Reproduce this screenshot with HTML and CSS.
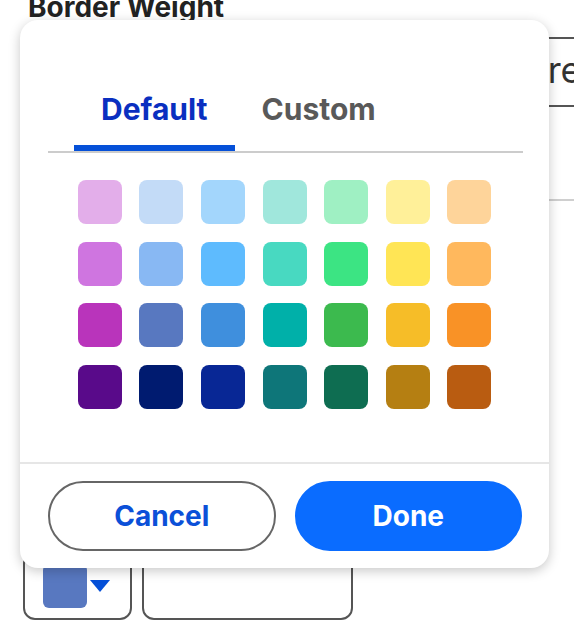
FILE: index.html
```html
<!DOCTYPE html>
<html lang="en">
<head>
    <meta charset="UTF-8">
    <meta name="viewport" content="width=device-width, initial-scale=1.0">
    <title>Border Color</title>
    <link rel="stylesheet" href="styles.css">
</head>
<body>

    <div class="page">
        <h2 class="section-title">Border Weight</h2>

        <div class="weight-row">
            <div class="segment">Square</div>
        </div>

        <hr class="divider">

        <div class="color-row">
            <button class="color-select">
                <span class="current-color"></span>
                <span class="caret"></span>
            </button>
            <div class="color-field"></div>
        </div>
    </div>

    <div class="picker">
        <div class="tabs">
            <div class="tab active">Default</div>
            <div class="tab">Custom</div>
        </div>

        <div class="swatches">
            <span class="swatch" style="background:#e3aeea"></span>
            <span class="swatch" style="background:#c3dbf7"></span>
            <span class="swatch" style="background:#a3d6fc"></span>
            <span class="swatch" style="background:#a0e7dc"></span>
            <span class="swatch" style="background:#9ff0c3"></span>
            <span class="swatch" style="background:#fff099"></span>
            <span class="swatch" style="background:#fed49a"></span>

            <span class="swatch" style="background:#cf75e0"></span>
            <span class="swatch" style="background:#88b8f3"></span>
            <span class="swatch" style="background:#5ebbfe"></span>
            <span class="swatch" style="background:#48d9c1"></span>
            <span class="swatch" style="background:#3ce483"></span>
            <span class="swatch" style="background:#ffe555"></span>
            <span class="swatch" style="background:#ffb85d"></span>

            <span class="swatch" style="background:#b934bb"></span>
            <span class="swatch" style="background:#5878c0"></span>
            <span class="swatch" style="background:#3f8fdd"></span>
            <span class="swatch" style="background:#00b0a9"></span>
            <span class="swatch" style="background:#3cba4e"></span>
            <span class="swatch" style="background:#f6bd28"></span>
            <span class="swatch" style="background:#f99226"></span>

            <span class="swatch" style="background:#590a8a"></span>
            <span class="swatch" style="background:#001b70"></span>
            <span class="swatch" style="background:#082795"></span>
            <span class="swatch" style="background:#0e7679"></span>
            <span class="swatch" style="background:#0e6d51"></span>
            <span class="swatch" style="background:#b57f12"></span>
            <span class="swatch" style="background:#b95c11"></span>
        </div>

        <div class="picker-footer">
            <button class="btn btn-cancel">Cancel</button>
            <button class="btn btn-done">Done</button>
        </div>
    </div>

</body>
</html>
```

FILE: styles.css
```css
body {
    margin: 0;
    background-color: white;
    font-family: Inter, "Liberation Sans", sans-serif;
    color: #222;
    overflow: hidden;
}
.page {
    height: 630px;
}
.section-title {
    margin: -10px 0 0 28px;
    font-size: 28px;
    line-height: 34px;
    font-weight: 700;
    color: #222;
}
.weight-row {
    margin-top: 13px;
    display: flex;
    padding-left: 461px;
}
.segment {
    flex: none;
    width: 300px;
    height: 62px;
    padding-bottom: 4px;
    border-top: 2px solid #555;
    border-bottom: 2px solid #555;
    font-size: 36px;
    line-height: 62px;
    color: #333;
}
.divider {
    margin: 92px 0 0 440px;
    border: none;
    border-top: 2px solid #cfcfcf;
}
.color-row {
    display: flex;
    gap: 10px;
    margin: 351px 0 0 23px;
}
.color-select {
    display: flex;
    align-items: center;
    gap: 3px;
    width: 109px;
    height: 68px;
    padding: 0 0 0 18px;
    background: white;
    border: 2px solid #555;
    border-radius: 12px;
}
.current-color {
    width: 44px;
    height: 44px;
    border-radius: 6px;
    background-color: #5878c0;
}
.caret {
    width: 0;
    height: 0;
    border-left: 10px solid transparent;
    border-right: 10px solid transparent;
    border-top: 12px solid #0550d8;
}
.color-field {
    width: 211px;
    height: 68px;
    box-sizing: border-box;
    border: 2px solid #555;
    border-radius: 12px;
}

/* color picker popover */
.picker {
    position: absolute;
    left: 20px;
    top: 20px;
    width: 529px;
    height: 548px;
    display: flex;
    flex-direction: column;
    background-color: white;
    border-radius: 18px;
    box-shadow: 0 3px 12px rgba(0, 0, 0, 0.22);
}
.tabs {
    display: flex;
    margin: 71px 26px 0 28px;
    padding-left: 26px;
    border-bottom: 2px solid #cccccc;
}
.tab {
    padding: 0 27px 18px;
    font-size: 30px;
    line-height: 36px;
    font-weight: 700;
    color: #595959;
    border-bottom: 6px solid transparent;
}
.tab.active {
    color: #0a2fc0;
    border-bottom-color: #0550d8;
}
.swatches {
    display: grid;
    grid-template-columns: repeat(7, 44px);
    gap: 17.67px;
    justify-content: center;
    margin-top: 27px;
}
.swatch {
    width: 44px;
    height: 44px;
    border-radius: 8px;
}
.picker-footer {
    display: flex;
    gap: 19px;
    margin-top: 53px;
    padding: 17px 27px 17px 28px;
    border-top: 2px solid #e6e6e6;
}
.btn {
    flex: 1 1 0;
    min-width: 0;
    height: 70px;
    padding: 0;
    border-radius: 35px;
    font-family: Inter, "Liberation Sans", sans-serif;
    font-size: 28px;
    font-weight: 700;
    cursor: pointer;
}
.btn-cancel {
    background-color: white;
    border: 2px solid #666;
    color: #0b50d8;
}
.btn-done {
    background-color: #0a6cff;
    border: 2px solid #0a6cff;
    color: white;
}
```
